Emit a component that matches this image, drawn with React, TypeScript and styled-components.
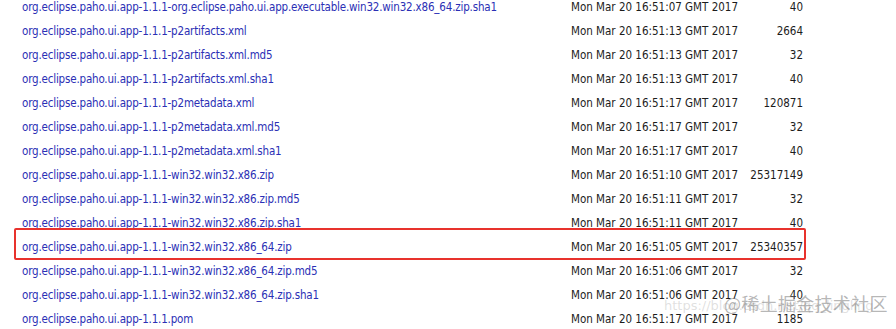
import styled, { createGlobalStyle } from "styled-components";

const GlobalStyle = createGlobalStyle`
	html, body {
		margin: 0;
		padding: 0;
		background: #ffffff;
		overflow: hidden;
	}
`;

const Page = styled.div`
	position: relative;
	width: 896px;
	height: 329px;
	overflow: hidden;
	font-family: "DejaVu Sans Condensed", "DejaVu Sans", sans-serif;
	font-size: 11.5px;
	color: #1c1c1c;
`;

const Listing = styled.div`
	display: flex;
	flex-direction: column;
	margin-top: -5px;
	padding-left: 22px;
`;

const Row = styled.div<{ $marked?: boolean }>`
	position: relative;
	display: grid;
	grid-template-columns: 549px 170px 62px;
	align-items: center;
	height: 24px;
	width: 781px;

	&::after {
		content: "";
		display: ${(p) => (p.$marked ? "block" : "none")};
		position: absolute;
		left: -8px;
		right: -3px;
		top: -7px;
		bottom: -1px;
		border: 2px solid #e8322d;
		border-radius: 2px;
		pointer-events: none;
	}
`;

const Name = styled.a`
	color: #2b2fb5;
	text-decoration: none;
	white-space: nowrap;
	letter-spacing: -0.18px;
`;

const Date = styled.span`
	white-space: nowrap;
`;

const Size = styled.span`
	text-align: right;
	white-space: nowrap;
`;

const Watermark = styled.div`
	position: absolute;
	left: 724px;
	top: 290px;
	font-family: "Noto Sans CJK SC", sans-serif;
	font-size: 18px;
	color: rgba(120, 120, 120, 0.55);
	white-space: nowrap;
	letter-spacing: 0.3px;
`;

const SourceMark = styled.div`
	position: absolute;
	left: 664px;
	top: 298px;
	font-family: "DejaVu Sans", sans-serif;
	font-size: 13px;
	color: rgba(150, 150, 150, 0.3);
	white-space: nowrap;
`;

const files: [string, string, string][] = [
	["org.eclipse.paho.ui.app-1.1.1-org.eclipse.paho.ui.app.executable.win32.win32.x86_64.zip.sha1", "Mon Mar 20 16:51:07 GMT 2017", "40"],
	["org.eclipse.paho.ui.app-1.1.1-p2artifacts.xml", "Mon Mar 20 16:51:13 GMT 2017", "2664"],
	["org.eclipse.paho.ui.app-1.1.1-p2artifacts.xml.md5", "Mon Mar 20 16:51:13 GMT 2017", "32"],
	["org.eclipse.paho.ui.app-1.1.1-p2artifacts.xml.sha1", "Mon Mar 20 16:51:13 GMT 2017", "40"],
	["org.eclipse.paho.ui.app-1.1.1-p2metadata.xml", "Mon Mar 20 16:51:17 GMT 2017", "120871"],
	["org.eclipse.paho.ui.app-1.1.1-p2metadata.xml.md5", "Mon Mar 20 16:51:17 GMT 2017", "32"],
	["org.eclipse.paho.ui.app-1.1.1-p2metadata.xml.sha1", "Mon Mar 20 16:51:17 GMT 2017", "40"],
	["org.eclipse.paho.ui.app-1.1.1-win32.win32.x86.zip", "Mon Mar 20 16:51:10 GMT 2017", "25317149"],
	["org.eclipse.paho.ui.app-1.1.1-win32.win32.x86.zip.md5", "Mon Mar 20 16:51:11 GMT 2017", "32"],
	["org.eclipse.paho.ui.app-1.1.1-win32.win32.x86.zip.sha1", "Mon Mar 20 16:51:11 GMT 2017", "40"],
	["org.eclipse.paho.ui.app-1.1.1-win32.win32.x86_64.zip", "Mon Mar 20 16:51:05 GMT 2017", "25340357"],
	["org.eclipse.paho.ui.app-1.1.1-win32.win32.x86_64.zip.md5", "Mon Mar 20 16:51:06 GMT 2017", "32"],
	["org.eclipse.paho.ui.app-1.1.1-win32.win32.x86_64.zip.sha1", "Mon Mar 20 16:51:06 GMT 2017", "40"],
	["org.eclipse.paho.ui.app-1.1.1.pom", "Mon Mar 20 16:51:17 GMT 2017", "1185"],
];

const App = () => {
	return (
		<Page>
			<GlobalStyle />
			<Listing>
				{files.map(([name, date, size]) => (
					<Row key={name} $marked={name.endsWith("x86_64.zip")}>
						<Name href="#">{name}</Name>
						<Date>{date}</Date>
						<Size>{size}</Size>
					</Row>
				))}
			</Listing>
			<SourceMark>https://blog.csdn.net/qq_lingling</SourceMark>
			<Watermark>@稀土掘金技术社区</Watermark>
		</Page>
	);
};

export default App;
